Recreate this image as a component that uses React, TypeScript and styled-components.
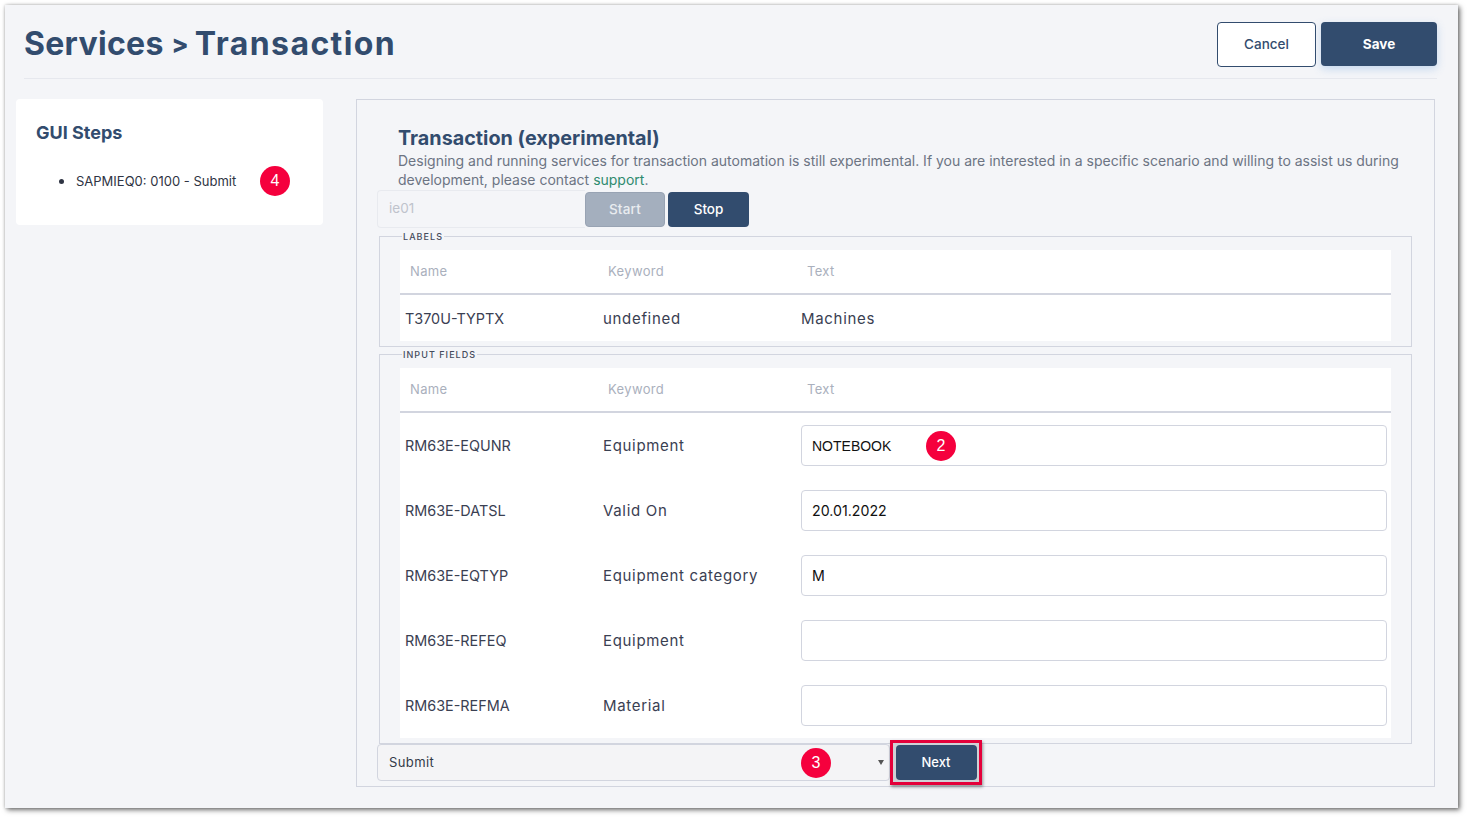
import React from 'react'
import styled, { createGlobalStyle } from 'styled-components'

const GlobalStyle = createGlobalStyle`
  html, body {
    margin: 0;
    background: #ffffff;
  }
  * {
    box-sizing: border-box;
  }
`

const FONT = `"Inter", "Open Sans", sans-serif`

const Shot = styled.div`
  width: 1467px;
  height: 817px;
  padding: 5px 9px 9px 5px;
  overflow: hidden;
  font-family: ${FONT};
`

const Page = styled.div`
  height: 803px;
  background: #f4f5f8;
  box-shadow: 2px 2px 5px rgba(0, 0, 0, 0.55), 0 0 3px rgba(0, 0, 0, 0.2);
  padding: 0 21px 0 11px;
`

const Header = styled.header`
  display: flex;
  align-items: flex-start;
  justify-content: space-between;
  height: 74px;
  margin-left: 8px;
  padding-top: 17px;
  border-bottom: 1px solid #e6e8ee;
`

const Title = styled.h1`
  margin: 1px 0 0;
  font-size: 32px;
  line-height: 42px;
  font-weight: 700;
  letter-spacing: 0.3px;
  color: #324c6e;
`

const TitleSeparator = styled.span`
  display: inline-block;
  font-size: 25px;
  font-weight: 800;
  vertical-align: 2px;
`

const TitleCrumb = styled.span`
  margin-left: -2px;
  letter-spacing: 1.4px;
`

const HeaderActions = styled.div`
  display: flex;
  gap: 5px;
`

const CancelButton = styled.button`
  width: 99px;
  height: 45px;
  padding-bottom: 2px;
  background: #ffffff;
  border: 1px solid #324c6e;
  border-radius: 4px;
  color: #324c6e;
  font: 500 13.5px ${FONT};
`

const SaveButton = styled.button`
  width: 116px;
  height: 44px;
  padding-bottom: 2px;
  background: #324c6e;
  border: none;
  border-radius: 4px;
  color: #ffffff;
  font: 700 13.5px ${FONT};
  box-shadow: 0 3px 8px rgba(90, 150, 220, 0.3);
`

const Content = styled.div`
  display: flex;
  align-items: flex-start;
  gap: 33px;
  margin-top: 20px;
`

const StepsCard = styled.aside`
  width: 307px;
  height: 126px;
  flex: none;
  background: #ffffff;
  border-radius: 4px;
  padding: 22px 20px;
`

const StepsTitle = styled.h2`
  margin: 0;
  font-size: 18px;
  line-height: 24px;
  font-weight: 700;
  color: #324c6e;
`

const StepsList = styled.ul`
  margin: 25px 0 0;
  padding-left: 40px;
  font-size: 13px;
  line-height: 20px;
  color: #2f3443;
`

const StepItem = styled.li`
  position: relative;
  width: 200px;
  &::marker {
    font-size: 17px;
  }
`

const Panel = styled.main`
  width: 1079px;
  height: 688px;
  flex: none;
  border: 1px solid #d2d5df;
  padding: 0 22px 0 20px;
`

const Intro = styled.div`
  height: 90px;
  padding: 26px 0 0 21px;
  overflow: hidden;
`

const IntroTitle = styled.h2`
  margin: 0 0 1px;
  font-size: 19.8px;
  line-height: 24px;
  font-weight: 700;
  color: #324c6e;
`

const IntroText = styled.p`
  margin: 0;
  font-size: 14px;
  line-height: 19px;
  color: #6c7483;
`

const SupportLink = styled.a`
  color: #2e8b6f;
`

const RunRow = styled.div`
  display: flex;
  align-items: center;
  height: 38px;
`

const ServerInput = styled.input`
  width: 208px;
  height: 38px;
  padding: 0 11px 2px;
  background: transparent;
  border: 1px solid #e8eaef;
  border-right: none;
  border-radius: 4px 0 0 4px;
  font: 400 13.5px ${FONT};
  color: #bfc3cc;
  &::placeholder {
    color: #bfc3cc;
  }
`

const RunButton = styled.button<{ $disabled?: boolean }>`
  width: ${props => (props.$disabled ? '80px' : '81px')};
  height: 35px;
  margin-left: ${props => (props.$disabled ? '0' : '3px')};
  background: ${props => (props.$disabled ? '#a4afbe' : '#324c6e')};
  border: ${props => (props.$disabled ? '1px solid #98a3b3' : 'none')};
  border-radius: 4px;
  color: ${props => (props.$disabled ? '#e9ecf0' : '#ffffff')};
  font: 500 13.5px ${FONT};
  letter-spacing: ${props => (props.$disabled ? '0.2px' : '0')};
`

const Group = styled.fieldset<{ $first?: boolean }>`
  margin: ${props => (props.$first ? '4px' : '0')} 0 3px 2px;
  padding: 0 20px 5px 20px;
  width: 1033px;
  border: 1px solid #d2d5df;
  min-inline-size: 0;
`

const GroupLegend = styled.legend`
  margin-left: 2px;
  padding: 0 1px;
  font-size: 9px;
  line-height: 9px;
  font-weight: 500;
  letter-spacing: 1.05px;
  color: #444b5c;
  text-transform: uppercase;
`

const FieldTable = styled.div`
  margin-top: 9px;
  background: #ffffff;
`

const HeadRow = styled.div`
  display: grid;
  grid-template-columns: 198px 199px 1fr;
  height: 45px;
  padding: 0 0 2px 10px;
  align-items: center;
  border-bottom: 2px solid #d2d5df;
  font-size: 13px;
  letter-spacing: 0.35px;
  color: #aab0bd;
`

const LabelRow = styled.div`
  display: grid;
  grid-template-columns: 198px 198px 1fr;
  height: 46px;
  padding-left: 5px;
  align-items: center;
  font-size: 14.4px;
  color: #3a4052;
`

const ValueCell = styled.span`
  font-size: 15px;
  letter-spacing: 0.68px;
`

const InputRow = styled(LabelRow)`
  height: 65px;
  padding-right: 4px;
`

const FieldCell = styled.div`
  position: relative;
`

const FieldInput = styled.input<{ $sans?: boolean }>`
  display: block;
  width: 100%;
  height: 41px;
  padding: 0 10px;
  background: #ffffff;
  border: 1px solid #d2d5df;
  border-radius: 4px;
  color: #111111;
  font: 400 ${props => (props.$sans ? '14px' : '14.2px')} ${props => (props.$sans ? `"Liberation Sans", sans-serif` : FONT)};
`

const SubmitRow = styled.div`
  display: flex;
  align-items: center;
  margin-top: -7px;
  height: 45px;
`

const SelectBox = styled.div`
  position: relative;
  display: flex;
  align-items: center;
  justify-content: space-between;
  width: 513px;
  height: 37px;
  padding: 0 5px 1px 11px;
  background: #f4f4f6;
  border: 1px solid #d2d5df;
  border-radius: 4px;
  font-size: 13px;
  letter-spacing: 0.4px;
  color: #333a48;
`

const Caret = styled.span`
  width: 0;
  height: 0;
  border-left: 3px solid transparent;
  border-right: 3px solid transparent;
  border-top: 5px solid #555555;
`

const NextFrame = styled.div`
  position: relative;
  display: flex;
  align-items: center;
  justify-content: center;
  width: 92px;
  height: 45px;
  background: #cfd1d6;
  border: 3px solid #e4003a;
  box-shadow: 1px 2px 3px rgba(0, 0, 0, 0.4);
`

const NextButton = styled.button`
  width: 81px;
  height: 35px;
  padding-bottom: 2px;
  background: #324c6e;
  border: none;
  border-radius: 4px;
  color: #ffffff;
  font: 500 13px ${FONT};
`

const Badge = styled.span<{ $top: number; $left: number }>`
  position: absolute;
  top: ${props => props.$top}px;
  left: ${props => props.$left}px;
  display: flex;
  align-items: center;
  justify-content: center;
  width: 30px;
  height: 30px;
  border-radius: 50%;
  background: #f5003d;
  color: #ffffff;
  font: 400 16px "Liberation Sans", sans-serif;
  letter-spacing: 0;
`

const labelFields = [{ name: 'T370U-TYPTX', keyword: 'undefined', text: 'Machines' }]

const inputFields = [
  { name: 'RM63E-EQUNR', keyword: 'Equipment', value: 'NOTEBOOK' },
  { name: 'RM63E-DATSL', keyword: 'Valid On', value: '20.01.2022' },
  { name: 'RM63E-EQTYP', keyword: 'Equipment category', value: 'M' },
  { name: 'RM63E-REFEQ', keyword: 'Equipment', value: '' },
  { name: 'RM63E-REFMA', keyword: 'Material', value: '' },
]

const TableHead = () => (
  <HeadRow>
    <span>Name</span>
    <span>Keyword</span>
    <span>Text</span>
  </HeadRow>
)

export default function App() {
  return (
    <Shot>
      <GlobalStyle />
      <Page>
        <Header>
          <Title>
            Services <TitleSeparator>&gt;</TitleSeparator> <TitleCrumb>Transaction</TitleCrumb>
          </Title>
          <HeaderActions>
            <CancelButton>Cancel</CancelButton>
            <SaveButton>Save</SaveButton>
          </HeaderActions>
        </Header>
        <Content>
          <StepsCard>
            <StepsTitle>GUI Steps</StepsTitle>
            <StepsList>
              <StepItem>
                SAPMIEQ0: 0100 - Submit
                <Badge $top={-4} $left={184}>4</Badge>
              </StepItem>
            </StepsList>
          </StepsCard>
          <Panel>
            <Intro>
              <IntroTitle>Transaction (experimental)</IntroTitle>
              <IntroText>
                Designing and running services for transaction automation is still experimental. If you are
                interested in a specific scenario and willing to assist us during development, please contact{' '}
                <SupportLink>support</SupportLink>.
              </IntroText>
            </Intro>
            <RunRow>
              <ServerInput placeholder="ie01" readOnly />
              <RunButton $disabled>Start</RunButton>
              <RunButton>Stop</RunButton>
            </RunRow>
            <Group $first>
              <GroupLegend>Labels</GroupLegend>
              <FieldTable>
                <TableHead />
                {labelFields.map(field => (
                  <LabelRow key={field.name}>
                    <span>{field.name}</span>
                    <ValueCell>{field.keyword}</ValueCell>
                    <ValueCell>{field.text}</ValueCell>
                  </LabelRow>
                ))}
              </FieldTable>
            </Group>
            <Group>
              <GroupLegend>Input Fields</GroupLegend>
              <FieldTable>
                <TableHead />
                {inputFields.map((field, index) => (
                  <InputRow key={field.name}>
                    <span>{field.name}</span>
                    <ValueCell>{field.keyword}</ValueCell>
                    <FieldCell>
                      <FieldInput readOnly defaultValue={field.value} $sans={index === 0} />
                      {index === 0 && <Badge $top={6} $left={125}>2</Badge>}
                    </FieldCell>
                  </InputRow>
                ))}
              </FieldTable>
            </Group>
            <SubmitRow>
              <SelectBox>
                Submit
                <Caret />
                <Badge $top={3} $left={423}>3</Badge>
              </SelectBox>
              <NextFrame>
                <NextButton>Next</NextButton>
              </NextFrame>
            </SubmitRow>
          </Panel>
        </Content>
      </Page>
    </Shot>
  )
}
